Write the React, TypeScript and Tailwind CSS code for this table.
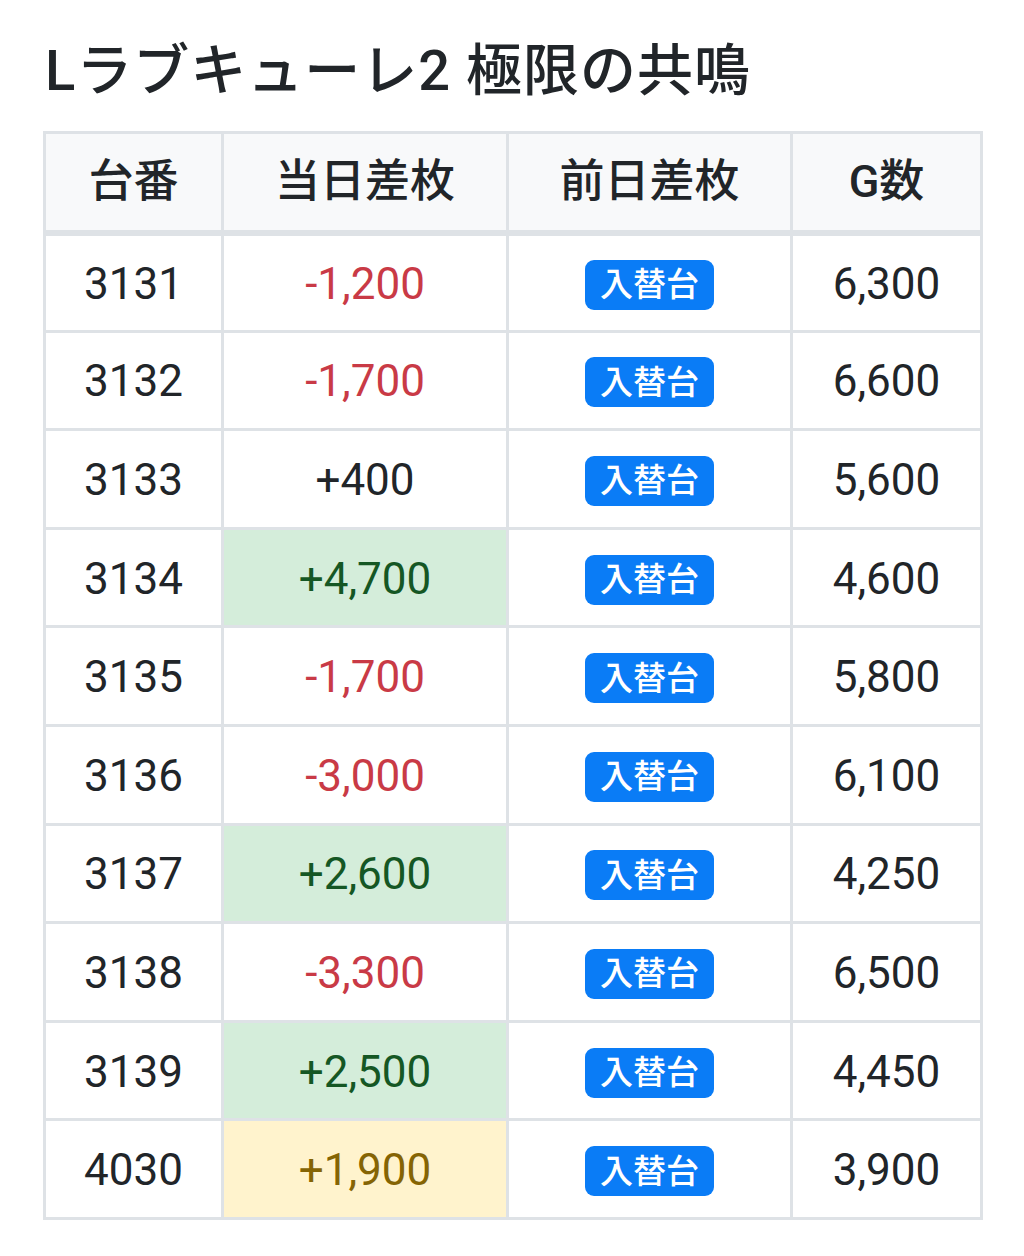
import React from "react";

type Row = { no: string; diff: string; g: string; tone: "red" | "plain" | "green" | "yellow" };

const rows: Row[] = [
  { no: "3131", diff: "-1,200", g: "6,300", tone: "red" },
  { no: "3132", diff: "-1,700", g: "6,600", tone: "red" },
  { no: "3133", diff: "+400", g: "5,600", tone: "plain" },
  { no: "3134", diff: "+4,700", g: "4,600", tone: "green" },
  { no: "3135", diff: "-1,700", g: "5,800", tone: "red" },
  { no: "3136", diff: "-3,000", g: "6,100", tone: "red" },
  { no: "3137", diff: "+2,600", g: "4,250", tone: "green" },
  { no: "3138", diff: "-3,300", g: "6,500", tone: "red" },
  { no: "3139", diff: "+2,500", g: "4,450", tone: "green" },
  { no: "4030", diff: "+1,900", g: "3,900", tone: "yellow" },
];

const toneClass: Record<Row["tone"], string> = {
  red: "text-[#c93a46]",
  plain: "text-[#212529]",
  green: "bg-[#d4edda] text-[#155724]",
  yellow: "bg-[#fff3cd] text-[#856404]",
};

export default function App() {
  return (
    <div
      className="bg-white min-h-[1256px] pl-[43px] pt-[38px] text-[#212529]"
      style={{ fontFamily: "Roboto, 'Noto Sans CJK JP', sans-serif" }}
    >
      <h1 className="text-[56px] font-medium leading-[67px] mb-[26px] pl-[2px] tracking-[1px]">
        Lラブキューレ2 極限の共鳴
      </h1>
      <table className="border-collapse w-[937px] table-fixed">
        <colgroup>
          <col className="w-[178px]" />
          <col className="w-[285px]" />
          <col className="w-[284px]" />
          <col className="w-[190px]" />
        </colgroup>
        <thead>
          <tr className="h-[100px] bg-[#f8f9fa]">
            {["台番", "当日差枚", "前日差枚", "G数"].map((h) => (
              <th
                key={h}
                className="border-[3px] border-[#dee2e6] border-b-[6px] text-[45px] font-medium text-center p-0"
              >
                {h}
              </th>
            ))}
          </tr>
        </thead>
        <tbody>
          {rows.map((r) => (
            <tr key={r.no} className="h-[98.6px]">
              <td className="border-[3px] border-[#dee2e6] text-center text-[44px] p-0 pt-[2px]">{r.no}</td>
              <td className={`border-[3px] border-[#dee2e6] text-center text-[44px] p-0 pt-[2px] ${toneClass[r.tone]}`}>
                {r.diff}
              </td>
              <td className="border-[3px] border-[#dee2e6] text-center p-0 pt-[4px]">
                <span className="inline-flex items-center justify-center bg-[#0a7cf6] text-white text-[33px] font-medium rounded-[9px] w-[129px] h-[50px] leading-none align-middle">
                  入替台
                </span>
              </td>
              <td className="border-[3px] border-[#dee2e6] text-center text-[44px] p-0 pt-[2px]">{r.g}</td>
            </tr>
          ))}
        </tbody>
      </table>
    </div>
  );
}
